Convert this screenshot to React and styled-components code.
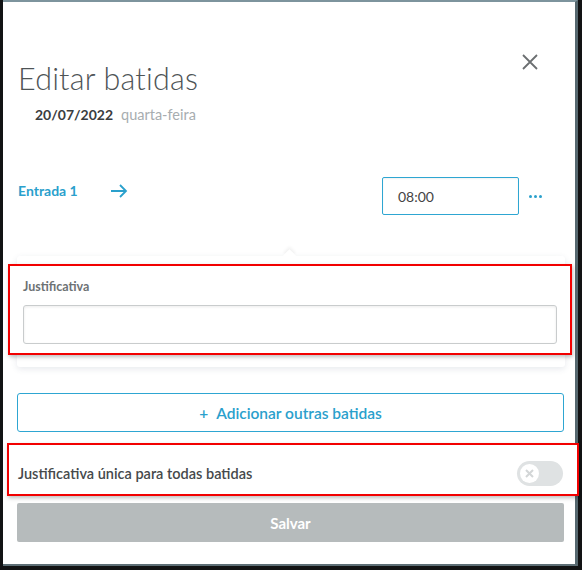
import React from "react";
import styled, { createGlobalStyle } from "styled-components";

const Global = createGlobalStyle`
  html, body { margin: 0; padding: 0; background: #121314; }
  body { font-family: Lato, "Open Sans", sans-serif; }
  * { box-sizing: border-box; }
`;

const Page = styled.div`
  width: 582px;
  height: 570px;
  padding: 0 4px 4px 3px;
`;

const Modal = styled.div`
  height: 566px;
  background: #fff;
  border-top: 2px solid #7d949d;
  border-right: 3px solid #56686f;
  border-bottom: 2px solid #5d6e75;
  padding: 0 10px 0 14px;
  display: flex;
  flex-direction: column;
`;

const Header = styled.div`
  display: flex;
  justify-content: space-between;
  align-items: flex-start;
  margin-top: 58px;
`;

const Title = styled.h1`
  margin: 0 0 0 1px;
  font-size: 30.5px;
  line-height: 36px;
  font-weight: 300;
  color: #4e5456;
  letter-spacing: 0.2px;
`;

const CloseBtn = styled.button`
  border: none;
  background: transparent;
  padding: 0;
  margin: -8px 25px 0 0;
  width: 20px;
  height: 20px;
  display: flex;
  align-items: center;
  justify-content: center;
  cursor: pointer;
`;

const DateLine = styled.div`
  margin: 9px 0 0 18px;
  font-size: 14px;
  line-height: 20px;
  display: flex;
  align-items: baseline;
  gap: 8px;
`;

const DateText = styled.span`
  font-weight: 700;
  color: #3a3d3f;
`;

const Weekday = styled.span`
  font-size: 14.5px;
  color: #a7adb0;
`;

const EntryRow = styled.div`
  display: flex;
  align-items: center;
  margin-top: 52px;
  height: 38px;
`;

const EntryLabel = styled.span`
  color: #2aa0cc;
  font-size: 14px;
  font-weight: 700;
  margin: -11px 0 0 1px;
  width: 92px;
`;

const Arrow = styled.span`
  display: flex;
  margin-top: -11px;
`;

const TimeBox = styled.div`
  margin-left: auto;
  width: 137px;
  height: 38px;
  border: 1px solid #2ea6d2;
  border-radius: 2px;
  padding-left: 15px;
  display: flex;
  align-items: center;
  font-size: 14px;
  color: #444;
  box-shadow: inset 0 1px 2px rgba(0, 0, 0, 0.06);
`;

const More = styled.span`
  display: flex;
  gap: 2px;
  margin: 0 23px 0 10px;
`;

const Dot = styled.i`
  width: 3px;
  height: 3px;
  border-radius: 50%;
  background: #2aa0cc;
`;

const Popover = styled.div`
  position: relative;
  margin-top: 41px;
  width: 548px;
  padding: 8px 0 12px;
  background: #fff;
  border-radius: 3px;
  box-shadow: 0 2px 6px rgba(60, 70, 110, 0.12);

  &::before {
    content: "";
    position: absolute;
    top: -5px;
    left: 268px;
    width: 9px;
    height: 9px;
    background: #fff;
    transform: rotate(45deg);
    box-shadow: -2px -2px 3px rgba(0, 0, 0, 0.05);
  }
`;

const Highlight = styled.div`
  position: relative;
  border: 2px solid #f20000;
  box-shadow: 1px 2px 4px rgba(0, 0, 0, 0.25);
  margin: ${(p) => p.$margin};
  padding: ${(p) => p.$pad};
  background: #fff;
`;

const FieldLabel = styled.div`
  font-size: 12.5px;
  line-height: 15px;
  font-weight: 700;
  color: #6d7274;
`;

const TextInput = styled.div`
  margin-top: 11px;
  height: 39px;
  border: 1px solid #c9cccd;
  border-radius: 3px;
  box-shadow: inset 0 1px 3px rgba(0, 0, 0, 0.08);
`;

const AddBtn = styled.button`
  margin-top: 26px;
  width: 547px;
  height: 39px;
  border: 1px solid #2ea6d2;
  border-radius: 3px;
  background: #fff;
  color: #2aa0cc;
  font-family: Lato, sans-serif;
  font-size: 15.5px;
  font-weight: 600;
  display: flex;
  align-items: center;
  justify-content: center;
  gap: 8px;
`;

const ToggleRow = styled.div`
  display: flex;
  align-items: center;
  justify-content: space-between;
`;

const ToggleLabel = styled.span`
  font-size: 14.5px;
  font-weight: 600;
  color: #45494b;
`;

const Switch = styled.span`
  width: 46px;
  height: 25px;
  border-radius: 13px;
  background: #dfe2e3;
  padding: 3px;
  display: flex;
`;

const Knob = styled.span`
  width: 19px;
  height: 19px;
  border-radius: 50%;
  background: #fff;
  display: flex;
  align-items: center;
  justify-content: center;
`;

const SaveBtn = styled.button`
  margin-top: 7px;
  width: 547px;
  height: 39px;
  border: none;
  border-radius: 2px;
  background: #b6bbbc;
  color: #fff;
  font-family: Lato, sans-serif;
  font-size: 15px;
  font-weight: 700;
`;

export default function App() {
  return (
    <>
      <Global />
      <Page>
        <Modal>
          <Header>
            <Title>Editar batidas</Title>
            <CloseBtn aria-label="Fechar">
              <svg width="16" height="16" viewBox="0 0 16 16">
                <path d="M1 1L15 15M15 1L1 15" stroke="#6b6f71" strokeWidth="1.8" />
              </svg>
            </CloseBtn>
          </Header>
          <DateLine>
            <DateText>20/07/2022</DateText>
            <Weekday>quarta-feira</Weekday>
          </DateLine>

          <EntryRow>
            <EntryLabel>Entrada 1</EntryLabel>
            <Arrow>
              <svg width="18" height="14" viewBox="0 0 18 14">
                <path d="M1 7H16M10 1L16 7L10 13" fill="none" stroke="#2aa0cc" strokeWidth="1.8" />
              </svg>
            </Arrow>
            <TimeBox>08:00</TimeBox>
            <More>
              <Dot />
              <Dot />
              <Dot />
            </More>
          </EntryRow>

          <Popover>
            <Highlight $margin="0 -7px 0 -9px" $pad="13px 13px 9px 13px">
              <FieldLabel>Justificativa</FieldLabel>
              <TextInput />
            </Highlight>
          </Popover>

          <AddBtn>
            <span>+</span>
            <span>Adicionar outras batidas</span>
          </AddBtn>

          <Highlight $margin="11px -14px 0 -10px" $pad="16px 14px 8px 9px">
            <ToggleRow>
              <ToggleLabel>Justificativa única para todas batidas</ToggleLabel>
              <Switch>
                <Knob>
                  <svg width="9" height="9" viewBox="0 0 9 9">
                    <path d="M1 1L8 8M8 1L1 8" stroke="#d3d6d7" strokeWidth="2" />
                  </svg>
                </Knob>
              </Switch>
            </ToggleRow>
          </Highlight>

          <SaveBtn>Salvar</SaveBtn>
        </Modal>
      </Page>
    </>
  );
}
